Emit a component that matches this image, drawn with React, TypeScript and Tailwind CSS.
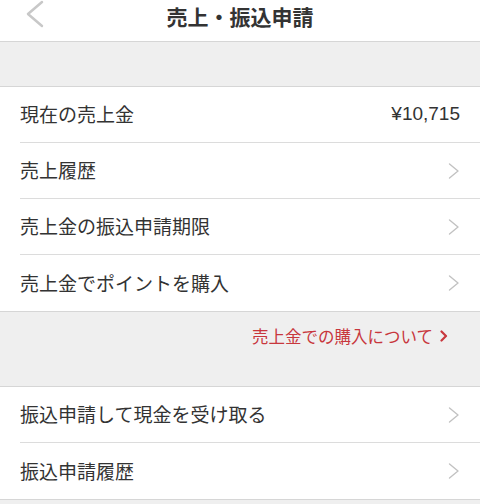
const font = { fontFamily: '"Noto Sans CJK JP", "Noto Sans", sans-serif' }

function Chevron({ className }: { className?: string }) {
  return (
    <svg viewBox="0 0 12 16" className={className} fill="none" stroke="currentColor" strokeWidth={1.4} strokeLinecap="round" strokeLinejoin="round">
      <polyline points="1.5,1 10,8 1.5,15" />
    </svg>
  )
}

function Row({ label, value, last }: { label: string; value?: string; last?: boolean }) {
  return (
    <div className="pl-5">
      <div className={`flex h-[56px] items-center justify-between pr-5 ${last ? '' : 'border-b border-[#dcdcdc]'}`}>
        <span className="text-[19px] text-[#333333]">{label}</span>
        {value ? (
          <span className="text-[19px] text-[#333333]" style={{ fontFamily: '"Liberation Sans", sans-serif' }}>{value}</span>
        ) : (
          <Chevron className="h-[16px] w-[12px] text-[#c2c2c2]" />
        )}
      </div>
    </div>
  )
}

export default function App() {
  return (
    <div className="h-[504px] w-[480px] overflow-hidden bg-[#efefef]" style={font}>
      <div className="relative flex h-[42px] items-center justify-center border-b border-[#d6d6d6] bg-white">
        <svg viewBox="0 0 20 30" className="absolute left-[25px] top-0 h-[30px] w-[20px] text-[#c8c8c8]" fill="none" stroke="currentColor" strokeWidth={2.5} strokeLinecap="round" strokeLinejoin="round">
          <polyline points="17,2 3,14 17,26" />
        </svg>
        <h1 className="-mt-2 text-[21px] font-bold text-[#333333]">売上・振込申請</h1>
      </div>
      <div className="h-[44px]" />
      <div className="border-y border-[#d6d6d6] bg-white">
        <Row label="現在の売上金" value="¥10,715" />
        <Row label="売上履歴" />
        <Row label="売上金の振込申請期限" />
        <Row label="売上金でポイントを購入" last />
      </div>
      <div className="flex h-[74px] justify-end pr-[32px] pt-[12px]">
        <span className="flex h-6 items-center text-[16.5px] text-[#c8373d]">
          売上金での購入について
          <svg viewBox="0 0 8 12" className="ml-[7px] h-[12px] w-[8px]" fill="none" stroke="currentColor" strokeWidth={2.2} strokeLinecap="round" strokeLinejoin="round">
            <polyline points="1.5,1.5 6,6 1.5,10.5" />
          </svg>
        </span>
      </div>
      <div className="border-y border-[#d6d6d6] bg-white">
        <Row label="振込申請して現金を受け取る" />
        <Row label="振込申請履歴" last />
      </div>
    </div>
  )
}
